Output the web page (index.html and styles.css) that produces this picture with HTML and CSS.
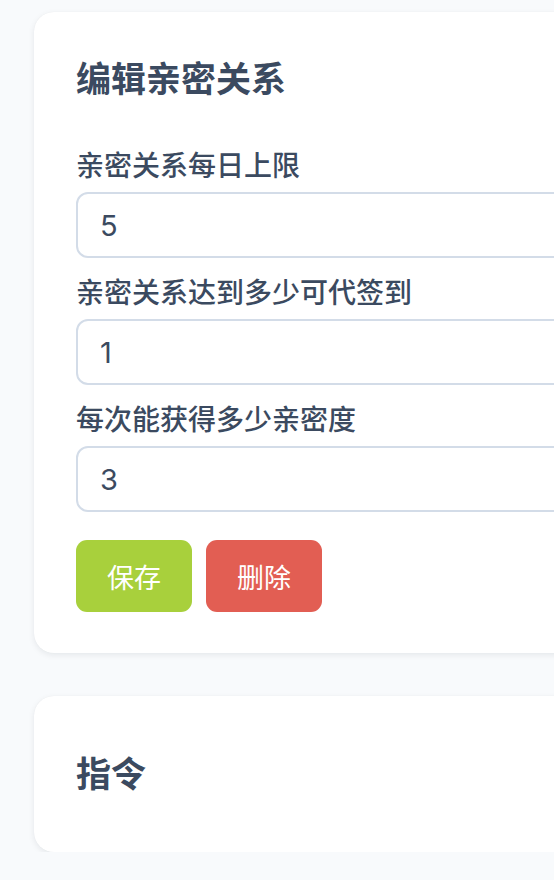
FILE: index.html
```html
<!DOCTYPE html>
<html lang="zh-CN">
<head>
<meta charset="utf-8">
<title>编辑亲密关系</title>
<link rel="stylesheet" href="styles.css">
</head>
<body>
<main class="page">
  <section class="card card-edit">
    <h2 class="card-title">编辑亲密关系</h2>
    <div class="field">
      <label class="field-label">亲密关系每日上限</label>
      <input class="field-input" type="text" value="5">
    </div>
    <div class="field">
      <label class="field-label">亲密关系达到多少可代签到</label>
      <input class="field-input" type="text" value="1">
    </div>
    <div class="field">
      <label class="field-label">每次能获得多少亲密度</label>
      <input class="field-input" type="text" value="3">
    </div>
    <div class="actions">
      <button class="btn btn-save" type="button">保存</button>
      <button class="btn btn-delete" type="button">删除</button>
    </div>
  </section>
  <section class="card card-cmd">
    <h2 class="card-title">指令</h2>
  </section>
</main>
</body>
</html>
```
FILE: styles.css
```css
html, body {
  margin: 0;
  padding: 0;
  overflow: hidden;
  background: #f8fafc;
}
body {
  font-family: Inter, "Noto Sans CJK SC", sans-serif;
  color: #3b4a60;
}
.page {
  padding: 12px 0 0 34px;
  display: flex;
  flex-direction: column;
  gap: 43px;
  width: 620px;
}
.card {
  background: #ffffff;
  border-radius: 20px;
  box-shadow: 0 2px 6px rgba(15, 23, 42, 0.08), 0 0 1px rgba(15, 23, 42, 0.06);
  padding: 0 0 0 42px;
}
.card-edit {
  padding-top: 44px;
  padding-bottom: 41px;
}
.card-cmd {
  padding-top: 55px;
  padding-bottom: 55px;
}
.card-title {
  margin: 0;
  font-size: 35px;
  line-height: 46px;
  font-weight: 700;
  color: #3b4a60;
}
.card-edit .card-title {
  margin-bottom: 43px;
}
.field {
  display: flex;
  flex-direction: column;
  gap: 5px;
  margin-bottom: 14px;
}
.field-label {
  font-size: 28px;
  line-height: 42px;
  font-weight: 500;
  color: #3b4a60;
}
.field-input {
  box-sizing: border-box;
  height: 66px;
  width: 560px;
  border: 2px solid #d3dce8;
  border-radius: 12px;
  padding: 0 22px;
  font-family: Inter, "Noto Sans CJK SC", sans-serif;
  font-size: 29px;
  color: #3b4a60;
  background: #fff;
  outline: none;
}
.actions {
  display: flex;
  gap: 14px;
  margin-top: 28px;
}
.btn {
  width: 116px;
  height: 72px;
  border: none;
  border-radius: 11px;
  color: #ffffff;
  font-family: "Noto Sans CJK SC", sans-serif;
  font-size: 27px;
  font-weight: 400;
  padding: 0;
}
.btn-save {
  background: #a8d03c;
}
.btn-delete {
  background: #e25e53;
}
```
